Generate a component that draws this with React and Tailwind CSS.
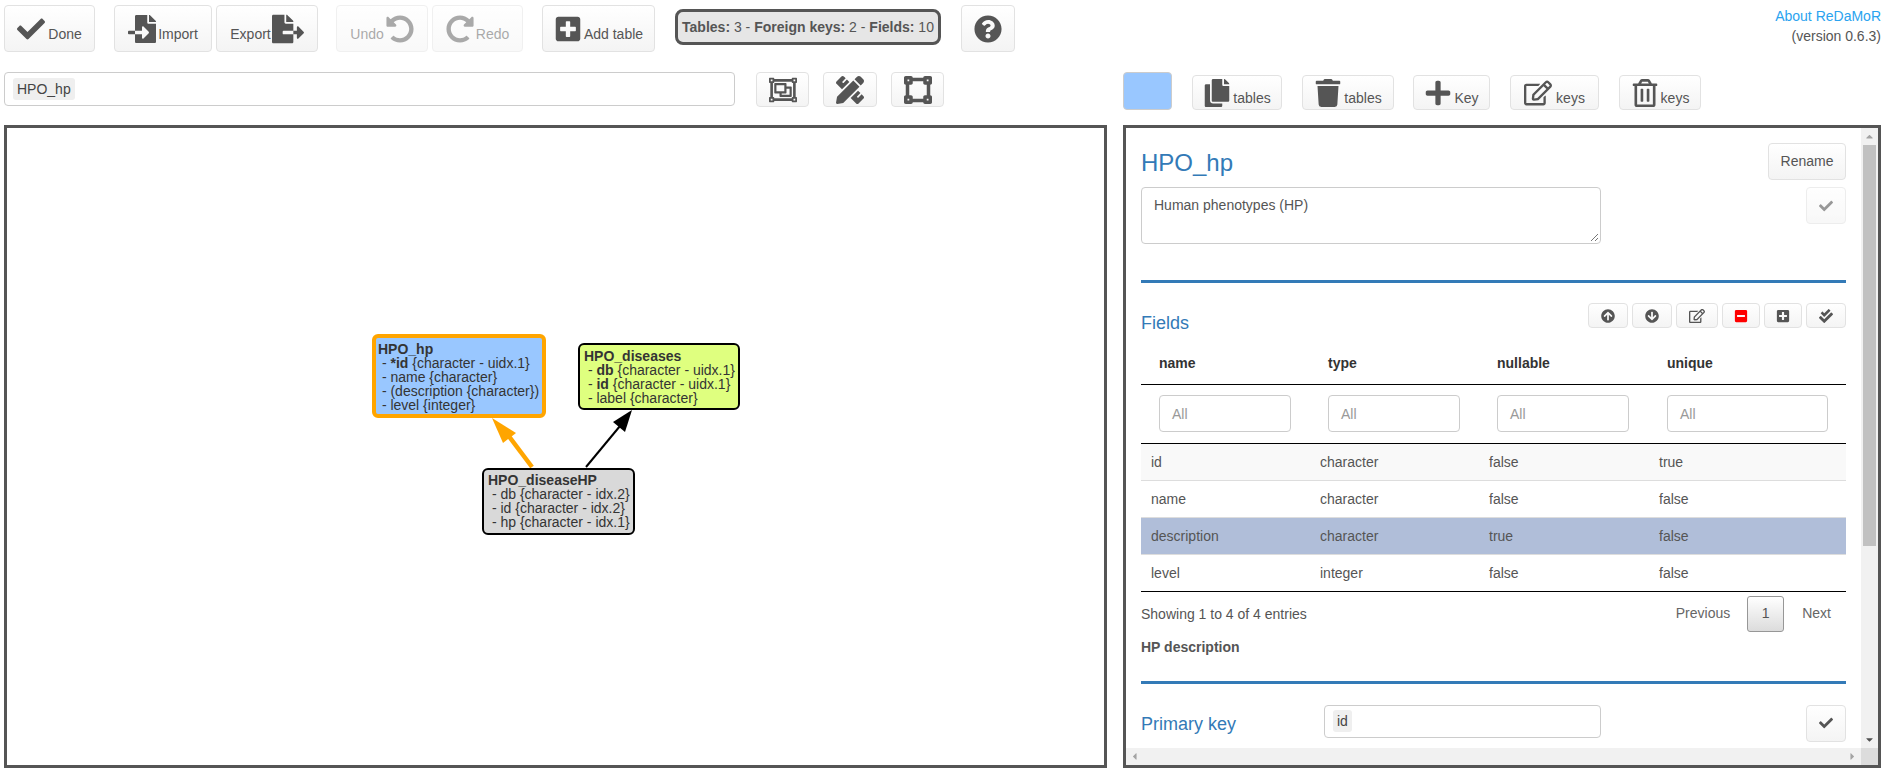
import React from 'react';
import {
  FaCheck,
  FaFileImport,
  FaFileExport,
  FaUndoAlt,
  FaRedoAlt,
  FaPlusSquare,
  FaQuestionCircle,
  FaRegObjectGroup,
  FaPencilRuler,
  FaVectorSquare,
  FaCopy,
  FaTrash,
  FaPlus,
  FaRegEdit,
  FaRegTrashAlt,
  FaArrowCircleUp,
  FaArrowCircleDown,
  FaMinusSquare,
  FaCheckDouble,
  FaCaretUp,
  FaCaretDown,
  FaCaretLeft,
  FaCaretRight,
} from 'react-icons/fa';

const btn =
  'flex items-center justify-center rounded-[4px] border border-[#e2e2e2] bg-gradient-to-b from-white to-[#f4f4f4] text-[14px] text-[#555555]';

function Toolbar() {
  return (
    <div className="flex h-[47px] mt-[5px] pl-[4px] items-start">
      {/* Main actions */}
      <button className={`${btn} w-[91px] h-[47px]`}>
        <FaCheck className="text-[28px] mr-[3px]" />
        <span className="mt-[11px]">Done</span>
      </button>
      <button className={`${btn} w-[98px] h-[47px] ml-[19px]`}>
        <FaFileImport className="text-[28px] mr-[2px]" />
        <span className="mt-[11px]">Import</span>
      </button>
      <button className={`${btn} w-[102px] h-[47px] ml-[4px]`}>
        <span className="mt-[11px] mr-[1px]">Export</span>
        <FaFileExport className="text-[32px]" />
      </button>
      <button className={`${btn} w-[92px] h-[47px] ml-[18px] opacity-50`}>
        <span className="mt-[11px] mr-[2px]">Undo</span>
        <FaUndoAlt className="text-[28px]" />
      </button>
      <button className={`${btn} w-[91px] h-[47px] ml-[4px] opacity-50`}>
        <FaRedoAlt className="text-[28px] mr-[2px]" />
        <span className="mt-[11px]">Redo</span>
      </button>
      <button className={`${btn} w-[113px] h-[47px] ml-[19px]`}>
        <FaPlusSquare className="text-[28px] mr-[2px]" />
        <span className="mt-[11px]">Add table</span>
      </button>

      {/* Model summary */}
      <div className="flex items-center justify-center w-[266px] h-[36px] mt-[4px] ml-[20px] pt-[1px] rounded-[8px] border-[3px] border-[#555555] bg-[#e6e6e6] text-[14px] text-[#555555] whitespace-nowrap">
        <b>Tables:</b>&nbsp;3 -&nbsp;<b>Foreign keys:</b>&nbsp;2 -&nbsp;<b>Fields:</b>&nbsp;10
      </div>

      <button className={`${btn} w-[54px] h-[47px] ml-[20px]`}>
        <FaQuestionCircle className="text-[28px]" />
      </button>

      {/* About */}
      <div className="ml-auto mr-[7px] mt-[1px] text-right text-[14px] leading-[20px] text-[#555555]">
        <a href="#" className="block text-[#2aa3ef]">About ReDaMoR</a>
        <div>(version 0.6.3)</div>
      </div>
    </div>
  );
}

function SecondRow() {
  return (
    <div className="flex items-start h-[38px] mt-[20px] pl-[4px]">
      <div className="flex items-center w-[731px] h-[34px] rounded-[4px] border border-[#cccccc] bg-white px-[8px]">
        <span className="rounded-[3px] bg-[#efefef] px-[4px] h-[22px] leading-[22px] text-[14px] text-[#444444]">HPO_hp</span>
      </div>
      <button className={`${btn} w-[53px] h-[35px] ml-[21px]`}>
        <FaRegObjectGroup className="text-[28px]" />
      </button>
      <button className={`${btn} w-[54px] h-[35px] ml-[14px]`}>
        <FaPencilRuler className="text-[28px]" />
      </button>
      <button className={`${btn} w-[53px] h-[35px] ml-[14px]`}>
        <FaVectorSquare className="text-[28px]" />
      </button>

      <div className="w-[49px] h-[38px] ml-[179px] rounded-[4px] border border-[#cccccc] bg-[#99c7ff]" />
      <button className={`${btn} w-[90px] h-[35px] mt-[3px] ml-[20px]`}>
        <FaCopy className="text-[28px] mr-[2px]" />
        <span className="mt-[11px]">tables</span>
      </button>
      <button className={`${btn} w-[92px] h-[35px] mt-[3px] ml-[20px]`}>
        <FaTrash className="text-[28px] mr-[2px]" />
        <span className="mt-[11px]">tables</span>
      </button>
      <button className={`${btn} w-[77px] h-[35px] mt-[3px] ml-[19px]`}>
        <FaPlus className="text-[28px] mr-[2px]" />
        <span className="mt-[11px]">Key</span>
      </button>
      <button className={`${btn} w-[89px] h-[35px] mt-[3px] ml-[20px]`}>
        <FaRegEdit className="text-[28px] mr-[4px]" />
        <span className="mt-[11px]">keys</span>
      </button>
      <button className={`${btn} w-[82px] h-[35px] mt-[3px] ml-[20px]`}>
        <FaRegTrashAlt className="text-[28px] mr-[2px]" />
        <span className="mt-[11px]">keys</span>
      </button>
    </div>
  );
}

function Node({ box, title, lines }) {
  return (
    <div className={`absolute whitespace-pre text-[14px] leading-[14px] text-[#343434] ${box}`}>
      <div className="font-bold">{title}</div>
      {lines.map((line, i) => (
        <div key={i}>{line}</div>
      ))}
    </div>
  );
}

function Canvas() {
  return (
    <div className="relative w-[1103px] h-[643px] border-[3px] border-[#555555] bg-white">
      <svg className="absolute left-0 top-0" width="1097" height="637">
        <line x1="525" y1="339" x2="501" y2="307" stroke="#ffa500" strokeWidth="4.5" />
        <polygon points="485,290 509,305 496,315" fill="#ffa500" />
        <line x1="579" y1="339" x2="613" y2="298" stroke="#000000" strokeWidth="2" />
        <polygon points="625,282 618,304 606,294" fill="#000000" />
      </svg>
      <Node
        box="left-[365px] top-[206px] w-[174px] h-[84px] rounded-[6px] border-[4px] border-[#ffa500] bg-[#99c7ff] pl-[2px] pt-[4px]"
        title="HPO_hp"
        lines={[
          <> - <b>*id</b> {'{character - uidx.1}'}</>,
          ' - name {character}',
          ' - (description {character})',
          ' - level {integer}',
        ]}
      />
      <Node
        box="left-[571px] top-[215px] w-[162px] h-[67px] rounded-[6px] border-2 border-black bg-[#dfff7f] pl-[4px] pt-[4px]"
        title="HPO_diseases"
        lines={[
          <> - <b>db</b> {'{character - uidx.1}'}</>,
          <> - <b>id</b> {'{character - uidx.1}'}</>,
          ' - label {character}',
        ]}
      />
      <Node
        box="left-[475px] top-[340px] w-[153px] h-[67px] rounded-[6px] border-2 border-black bg-[#d9d9d9] pl-[4px] pt-[3px]"
        title="HPO_diseaseHP"
        lines={[
          ' - db {character - idx.2}',
          ' - id {character - idx.2}',
          ' - hp {character - idx.1}',
        ]}
      />
    </div>
  );
}

const rows = [
  { name: 'id', type: 'character', nullable: 'false', unique: 'true', bg: 'bg-[#f9f9f9]' },
  { name: 'name', type: 'character', nullable: 'false', unique: 'false', bg: 'bg-white' },
  { name: 'description', type: 'character', nullable: 'true', unique: 'false', bg: 'bg-[#b0bed9]' },
  { name: 'level', type: 'integer', nullable: 'false', unique: 'false', bg: 'bg-white' },
];

const heading = ['name', 'type', 'nullable', 'unique'];

function FieldsTable() {
  return (
    <table className="w-[705px] table-fixed border-collapse text-[14px] text-[#555555] mt-[6px]">
      <colgroup>
        <col className="w-[169px]" />
        <col className="w-[169px]" />
        <col className="w-[170px]" />
        <col className="w-[197px]" />
      </colgroup>
      <thead>
        <tr className="h-[45px] border-b border-black">
          {heading.map((h) => (
            <th key={h} className="pl-[18px] pt-[4px] text-left font-bold text-[#333333]">{h}</th>
          ))}
        </tr>
        <tr className="h-[59px] border-b border-black">
          {heading.map((h, i) => (
            <td key={h} className="pl-[18px]">
              <div className={`flex items-center h-[37px] pt-[1px] rounded-[4px] border border-[#cccccc] px-[12px] text-[#999999] ${i === 3 ? 'w-[161px]' : 'w-[132px]'}`}>All</div>
            </td>
          ))}
        </tr>
      </thead>
      <tbody>
        {rows.map((r, i) => (
          <tr key={r.name} className={`h-[37px] ${r.bg} ${i === 3 ? 'border-b border-black' : 'border-b border-[#dddddd]'}`}>
            <td className="pl-[10px] pt-[2px]">{r.name}</td>
            <td className="pl-[10px] pt-[2px]">{r.type}</td>
            <td className="pl-[10px] pt-[2px]">{r.nullable}</td>
            <td className="pl-[10px] pt-[2px]">{r.unique}</td>
          </tr>
        ))}
      </tbody>
    </table>
  );
}

function TablePanel() {
  return (
    <div className="flex flex-col w-[758px] h-[643px] border-[3px] border-[#555555] bg-white">
      <div className="flex flex-1 min-h-0">
        {/* Scrolled content */}
        <div className="flex-1 overflow-hidden px-[15px] pt-[15px]">
          <div className="flex items-start justify-between">
            <h2 className="text-[24px] leading-[26px] mt-[7px] text-[#337ab7]">HPO_hp</h2>
            <button className={`${btn} w-[78px] h-[37px]`}>Rename</button>
          </div>
          <div className="flex items-start justify-between mt-[7px]">
            <div className="relative w-[460px] h-[57px] rounded-[4px] border border-[#cccccc] px-[12px] py-[7px] text-[14px] text-[#555555]">
              Human phenotypes (HP)
              <svg className="absolute right-[1px] bottom-[1px]" width="9" height="9">
                <path d="M1 8 L8 1 M5 8 L8 5" stroke="#777777" strokeWidth="1" />
              </svg>
            </div>
            <button className={`${btn} w-[40px] h-[37px] opacity-60`}>
              <FaCheck className="text-[14px]" />
            </button>
          </div>

          <div className="h-[3px] mt-[36px] bg-[#337ab7]" />

          <div className="flex items-start justify-between mt-[20px]">
            <h3 className="text-[18px] leading-[20px] mt-[10px] text-[#337ab7]">Fields</h3>
            <div className="flex gap-[4px]">
              <button className={`${btn} w-[40px] h-[25px]`}><FaArrowCircleUp className="text-[14px]" /></button>
              <button className={`${btn} w-[40px] h-[25px]`}><FaArrowCircleDown className="text-[14px]" /></button>
              <button className={`${btn} w-[42px] h-[25px]`}><FaRegEdit className="text-[16px]" /></button>
              <button className={`${btn} w-[38px] h-[25px]`}><FaMinusSquare className="text-[14px] text-[#ff0000]" /></button>
              <button className={`${btn} w-[38px] h-[25px]`}><FaPlusSquare className="text-[14px]" /></button>
              <button className={`${btn} w-[40px] h-[25px]`}><FaCheckDouble className="text-[14px]" /></button>
            </div>
          </div>

          <FieldsTable />

          <div className="flex items-start justify-between text-[14px] text-[#555555]">
            <div className="mt-[12px]">Showing 1 to 4 of 4 entries</div>
            <div className="flex items-center mt-[4px]">
              <span className="text-[#666666]">Previous</span>
              <span className="flex items-center justify-center w-[37px] h-[36px] ml-[17px] mr-[18px] rounded-[3px] border border-[#979797] bg-gradient-to-b from-white to-[#dcdcdc]">1</span>
              <span className="mr-[15px] text-[#666666]">Next</span>
            </div>
          </div>
          <div className="mt-[5px] text-[14px] font-bold text-[#555555]">HP description</div>

          <div className="h-[3px] mt-[23px] bg-[#337ab7]" />

          <div className="flex items-start mt-[21px]">
            <h3 className="w-[183px] mt-[7px] text-[18px] leading-[24px] text-[#337ab7]">Primary key</h3>
            <div className="flex items-center w-[277px] h-[33px] rounded-[4px] border border-[#cccccc] px-[8px]">
              <span className="rounded-[3px] bg-[#efefef] px-[4px] h-[22px] leading-[22px] text-[14px] text-[#444444]">id</span>
            </div>
            <button className={`${btn} w-[40px] h-[37px] ml-auto`}>
              <FaCheck className="text-[14px]" />
            </button>
          </div>
        </div>

        {/* Vertical scrollbar */}
        <div className="relative w-[17px] bg-[#f1f1f1] flex flex-col items-center justify-between text-[#a3a3a3]">
          <FaCaretUp className="text-[11px] mt-[3px]" />
          <div className="absolute top-[17px] left-[2px] w-[13px] h-[401px] bg-[#c1c1c1]" />
          <FaCaretDown className="text-[11px] mb-[3px] text-[#505050]" />
        </div>
      </div>

      {/* Horizontal scrollbar */}
      <div className="flex items-center h-[17px] bg-[#f1f1f1] text-[#a3a3a3]">
        <FaCaretLeft className="text-[11px] ml-[3px]" />
        <FaCaretRight className="text-[11px] ml-auto mr-[3px]" />
        <div className="w-[17px] h-[17px] bg-[#dcdcdc]" />
      </div>
    </div>
  );
}

export default function App() {
  return (
    <div className="h-screen w-full overflow-hidden bg-white font-['Liberation_Sans',Arial,sans-serif]">
      <Toolbar />
      <SecondRow />
      <div className="flex mt-[15px] pl-[4px]">
        <Canvas />
        <div className="ml-[16px]">
          <TablePanel />
        </div>
      </div>
    </div>
  );
}
